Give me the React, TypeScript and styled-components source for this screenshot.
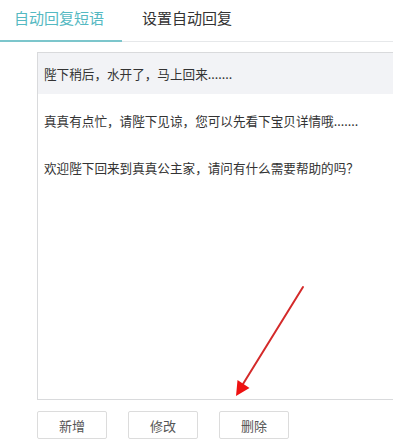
import React from 'react';
import styled, { createGlobalStyle } from 'styled-components';

const GlobalStyle = createGlobalStyle`
  html, body {
    margin: 0;
    padding: 0;
    background: #fff;
    overflow: hidden;
  }
  body {
    font-family: "Noto Sans CJK SC", "Noto Sans", sans-serif;
  }
`;

const Page = styled.div`
  width: 393px;
  height: 447px;
  overflow: hidden;
  background: #fff;
`;

const TabBar = styled.div`
  display: flex;
  height: 41px;
  border-bottom: 1px solid #e6e8ea;
`;

const Tab = styled.div<{ active?: boolean }>`
  display: flex;
  align-items: center;
  box-sizing: border-box;
  height: 42px;
  padding: 0 0 5px 0;
  padding-left: ${(p) => (p.active ? '14px' : '0')};
  margin-left: ${(p) => (p.active ? '0' : '20px')};
  width: ${(p) => (p.active ? '122px' : 'auto')};
  font-size: 15px;
  color: ${(p) => (p.active ? '#55b9c2' : '#333')};
  border-bottom: 2px solid ${(p) => (p.active ? '#7cc6cc' : 'transparent')};
`;

const Body = styled.div`
  padding: 10px 0 0 37px;
`;

const Panel = styled.div`
  position: relative;
  box-sizing: border-box;
  width: 380px;
  height: 348px;
  border: 1px solid #d9dadc;
`;

const Row = styled.div<{ selected?: boolean }>`
  display: flex;
  align-items: center;
  height: 41px;
  margin-bottom: 6px;
  padding-left: 6px;
  font-size: 12.6px;
  color: #333;
  white-space: nowrap;
  background: ${(p) => (p.selected ? '#f2f3f6' : 'transparent')};
`;

const Arrow = styled.svg`
  position: absolute;
  left: 190px;
  top: 230px;
  pointer-events: none;
`;

const Actions = styled.div`
  display: flex;
  gap: 21px;
  margin-top: 11px;
`;

const Button = styled.button`
  width: 70px;
  height: 28px;
  box-sizing: border-box;
  background: #fff;
  border: 1px solid #dcdcdc;
  border-radius: 2px;
  font-family: "Noto Sans CJK SC", "Noto Sans", sans-serif;
  font-size: 13px;
  color: #555;
  padding: 0;
  cursor: pointer;
`;

const phrases = [
  '陛下稍后，水开了，马上回来.......',
  '真真有点忙，请陛下见谅，您可以先看下宝贝详情哦.......',
  '欢迎陛下回来到真真公主家，请问有什么需要帮助的吗？',
];

export default function App() {
  return (
    <Page>
      <GlobalStyle />
      <TabBar>
        <Tab active>自动回复短语</Tab>
        <Tab>设置自动回复</Tab>
      </TabBar>
      <Body>
        <Panel>
          {phrases.map((p, i) => (
            <Row key={i} selected={i === 0}>
              {p}
            </Row>
          ))}
          <Arrow width="130" height="120" viewBox="0 0 130 120">
            <line x1="75" y1="4" x2="15" y2="101" stroke="#d42a2a" strokeWidth="2" strokeLinecap="round" />
            <polygon points="8,113 21.5,105 9.5,97" fill="#ee1111" />
          </Arrow>
        </Panel>
        <Actions>
          <Button>新增</Button>
          <Button>修改</Button>
          <Button>删除</Button>
        </Actions>
      </Body>
    </Page>
  );
}
